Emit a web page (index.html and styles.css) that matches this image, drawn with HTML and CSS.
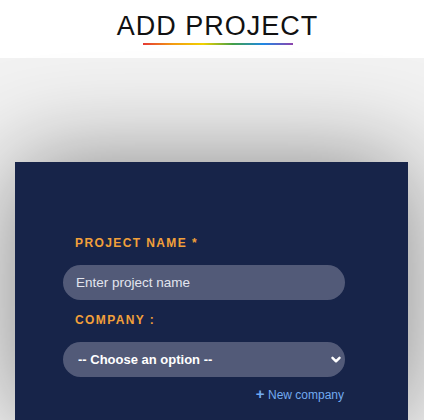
FILE: index.html
```html
<!DOCTYPE html>
<html lang="en">
<head>
<meta charset="utf-8">
<title>Add Project</title>
<link rel="stylesheet" href="styles.css">
</head>
<body>
<header class="header">
  <h1 class="title">ADD PROJECT</h1>
  <div class="rainbow"></div>
</header>
<main class="stage">
  <section class="card">
    <form class="form">
      <label class="label" for="pname">PROJECT NAME *</label>
      <input class="field" id="pname" type="text" placeholder="Enter project name">
      <label class="label" for="company">COMPANY :</label>
      <div class="select-wrap">
        <select class="field select" id="company">
          <option>-- Choose an option --</option>
        </select>
        <svg class="chevron" width="10" height="8" viewBox="0 0 10 8"><path d="M1.5 1.8 L5 5.3 L8.5 1.8" fill="none" stroke="#ffffff" stroke-width="2.4" stroke-linecap="round" stroke-linejoin="round"/></svg>
      </div>
      <div class="link-row">
        <a class="new-link" href="#"><span class="plus">+</span> New company</a>
      </div>
    </form>
  </section>
</main>
</body>
</html>
```
FILE: styles.css
```css
html, body {
  margin: 0;
  padding: 0;
  height: 100%;
  overflow: hidden;
}
body {
  font-family: "Liberation Sans", Arial, sans-serif;
  background: #f2f2f2;
}
.header {
  background: #ffffff;
  height: 58px;
  box-sizing: border-box;
  padding: 11px 0 0 11px;
  display: flex;
  flex-direction: column;
  align-items: center;
}
.title {
  margin: 0;
  font-size: 27px;
  font-weight: normal;
  letter-spacing: 1px;
  line-height: 31px;
  color: #111111;
}
.rainbow {
  margin-top: 1px;
  width: 150px;
  height: 2px;
  background: linear-gradient(to right, #e53935, #f39c12, #f1d100, #43a047, #1e88e5, #8e44ad);
}
.stage {
  padding: 104px 16px 0 15px;
}
.card {
  background: #172449;
  height: 258px;
  box-shadow: 0 0 100px rgba(0, 0, 0, 0.45);
  padding: 74px 0 0 48px;
  box-sizing: border-box;
}
.form {
  width: 282px;
  display: flex;
  flex-direction: column;
}
.label {
  display: block;
  padding-left: 12px;
  font-size: 12px;
  line-height: 14px;
  font-weight: bold;
  letter-spacing: 1.4px;
  color: #f2a03a;
  margin-bottom: 15px;
}
.field {
  box-sizing: border-box;
  width: 282px;
  height: 35px;
  border: none;
  border-radius: 18px;
  background: #525a78;
  color: #ffffff;
  font-family: "Liberation Sans", Arial, sans-serif;
  outline: none;
  margin: 0 0 13px 0;
}
input.field {
  padding: 0 12px 0 13px;
  font-size: 13.5px;
}
input.field::placeholder {
  color: #e2e5ee;
  opacity: 1;
}
.select-wrap {
  position: relative;
  margin-bottom: 10px;
}
.select {
  appearance: none;
  -webkit-appearance: none;
  padding: 0 30px 0 15px;
  font-size: 13px;
  font-weight: bold;
  margin: 0;
  display: block;
}
.chevron {
  position: absolute;
  right: 4px;
  top: 14px;
  pointer-events: none;
}
.link-row {
  display: flex;
  justify-content: flex-end;
  padding-right: 1px;
}
.new-link {
  font-size: 12px;
  line-height: 14px;
  color: #72aaf0;
  text-decoration: none;
}
.plus {
  font-weight: bold;
  font-size: 15px;
}
```
